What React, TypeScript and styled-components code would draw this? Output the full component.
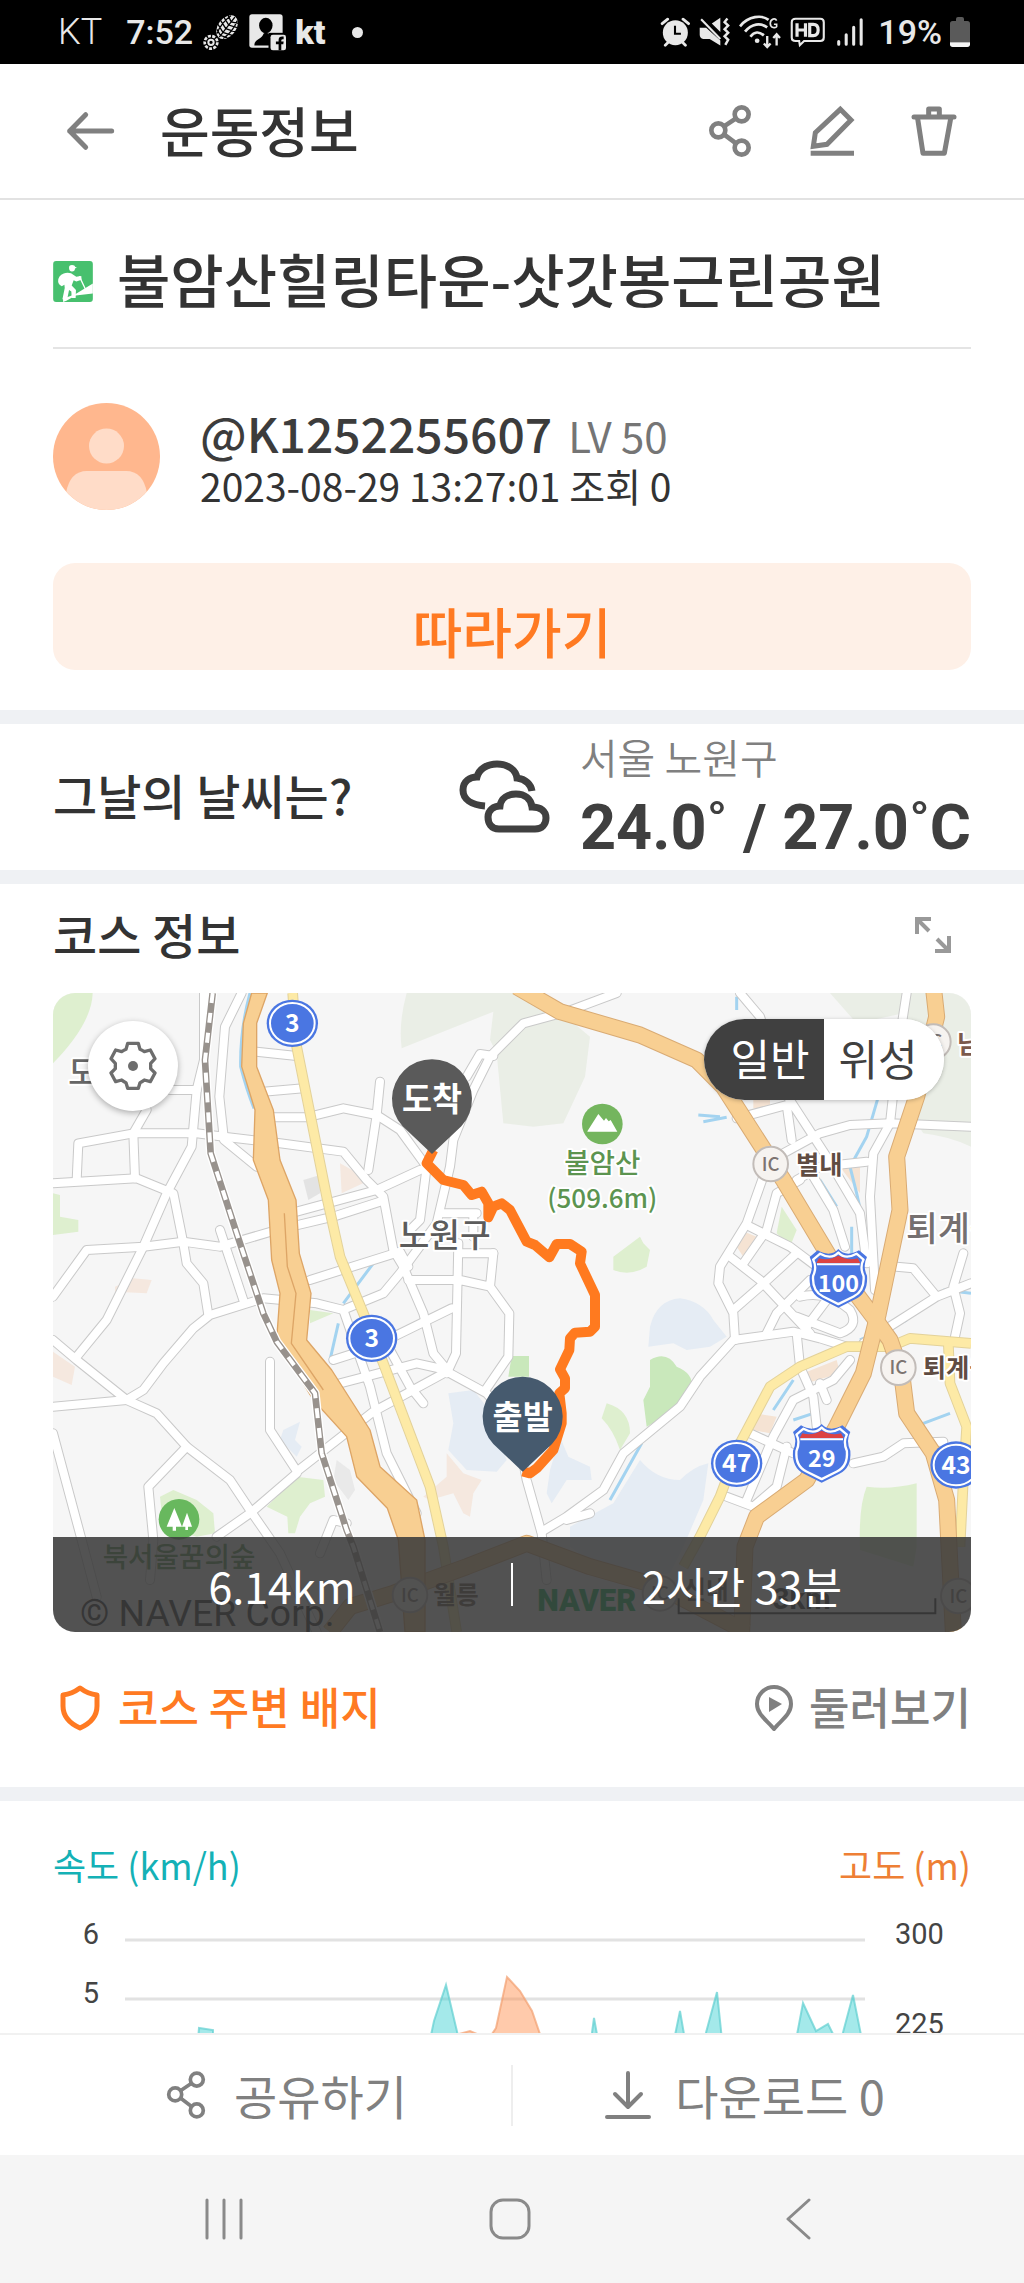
import React, { useState } from "react";
import styled, { createGlobalStyle, css } from "styled-components";

const KR = `"Noto Sans CJK KR", sans-serif`;
const ROBOTO = `Roboto, "Noto Sans CJK KR", sans-serif`;

const INK = "#333333";
const MUTED = "#808080";
const ORANGE = "#ff7a22";

const GlobalStyle = createGlobalStyle`
  *, *::before, *::after { box-sizing: border-box; }
  body { margin: 0; background: #ffffff; }
  button { border: 0; padding: 0; margin: 0; background: none; font: inherit; color: inherit; cursor: pointer; }
  a { color: inherit; text-decoration: none; }
  h1, h2, p { margin: 0; font-size: inherit; font-weight: inherit; }
  svg { display: block; flex: none; }
`;

const Screen = styled.div`
  display: flex;
  flex-direction: column;
  min-height: 100vh;
  background: #ffffff;
  color: ${INK};
  font-family: ${KR};
`;

/* ---------- status bar ---------- */

const StatusBar = styled.div`
  display: flex;
  justify-content: space-between;
  align-items: center;
  height: 64px;
  padding: 0 54px 0 58px;
  background: #000000;
  color: #e8e8e8;
  font-family: ${ROBOTO};
  font-size: 36px;
  line-height: 40px;
`;

const StatusGroup = styled.div<{ $gap: number }>`
  display: flex;
  align-items: center;
  gap: ${(p) => p.$gap}px;
`;

const Carrier = styled.span`
  margin-right: 15px;
  font-weight: 300;
`;

const StatusText = styled.span`
  font-weight: 500;
  font-size: 34px;
`;

const KtMark = styled.span`
  font-weight: 900;
  font-size: 34px;
`;

const Dot = styled.span`
  width: 11px;
  height: 11px;
  margin-left: 18px;
  border-radius: 50%;
  background: #e8e8e8;
`;

/* ---------- header ---------- */

const Header = styled.header`
  display: flex;
  align-items: center;
  padding: 40px 63px 40px 63px;
  border-bottom: 2px solid #e2e2e2;
  color: ${MUTED};
`;

const HeaderTitle = styled.h1`
  flex: 1;
  margin-left: 43px;
  padding-bottom: 2px;
  color: ${INK};
  font-size: 54px;
  font-weight: 500;
  line-height: 52px;
`;

const HeaderActions = styled.div`
  display: flex;
  gap: 48px;
`;

const IconButton = styled.button`
  display: flex;
  align-items: center;
  justify-content: center;
`;

/* ---------- sections ---------- */

const Section = styled.section`
  padding: 0 53px;
`;

const Divider = styled.div`
  height: 14px;
  background: #eff1f4;
`;

const CourseTitle = styled.div`
  display: flex;
  align-items: center;
  gap: 24px;
  padding: 49px 0 34px;
  border-bottom: 2px solid #e4e4e4;
  white-space: nowrap;

  h2 {
    padding-bottom: 6px;
    font-size: 58px;
    font-weight: 500;
    line-height: 58px;
  }
`;

const Profile = styled.div`
  display: flex;
  align-items: center;
  gap: 40px;
  padding: 54px 0 53px;
`;

const ProfileText = styled.div`
  white-space: nowrap;
`;

const NameLine = styled.p`
  display: flex;
  align-items: baseline;
  gap: 16px;
  line-height: 56px;
`;

const UserName = styled.strong`
  color: #3c3c3c;
  font-size: 48px;
  font-weight: 500;
`;

const Level = styled.span`
  color: #757575;
  font-size: 42px;
  line-height: 42px;
`;

const DateLine = styled.p`
  color: ${INK};
  font-size: 39px;
  line-height: 50px;
`;

const FollowButton = styled.button`
  display: block;
  width: 100%;
  margin-bottom: 40px;
  padding: 36px 0 7px;
  border-radius: 22px;
  background: #fef0e7;
  color: ${ORANGE};
  font-size: 54px;
  font-weight: 500;
  line-height: 64px;
`;

const Weather = styled(Section)`
  display: flex;
  align-items: center;
  padding-top: 2px;
  padding-bottom: 4px;
`;

const SectionTitle = styled.h2`
  flex: 1;
  padding-bottom: 4px;
  font-size: 48px;
  font-weight: 500;
  line-height: 56px;
`;

const WeatherInfo = styled.div`
  margin-left: 30px;
  padding-top: 6px;
  white-space: nowrap;
`;

const Region = styled.p`
  margin-bottom: 10px;
  color: ${MUTED};
  font-size: 41px;
  font-weight: 350;
  line-height: 48px;
`;

const Temperature = styled.p`
  color: #3f3f3f;
  font-family: ${ROBOTO};
  font-size: 63px;
  font-weight: 700;
  line-height: 76px;
`;

const CourseHeader = styled.div`
  display: flex;
  align-items: center;
  padding: 21px 20px 28px 0;
  color: #999999;

  h2 {
    color: ${INK};
  }
`;

/* ---------- map ---------- */

const MapCard = styled.div`
  position: relative;
  overflow: hidden;
  border-radius: 22px;
  background: #f6f6f6;
`;

const MapSvg = styled.svg`
  width: 100%;
  height: auto;
`;

const GearButton = styled.button`
  position: absolute;
  top: 28px;
  left: 35px;
  display: flex;
  align-items: center;
  justify-content: center;
  width: 90px;
  height: 90px;
  border-radius: 50%;
  background: #ffffff;
  box-shadow: 0 2px 6px rgba(0, 0, 0, 0.3);
  color: #6d6d6d;
`;

const LayerToggle = styled.div`
  position: absolute;
  top: 26px;
  right: 27px;
  display: flex;
  overflow: hidden;
  border-radius: 41px;
  background: #ffffff;
  box-shadow: 0 1px 4px rgba(0, 0, 0, 0.25);
`;

const LayerButton = styled.button<{ $active: boolean; $side: "left" | "right" }>`
  width: 120px;
  padding: ${(p) => (p.$side === "left" ? "0 0 4px 12px" : "0 12px 4px 0")};
  font-size: 43px;
  line-height: 77px;
  ${(p) =>
    p.$active
      ? css`
          background: #404040;
          color: #ffffff;
        `
      : css`
          background: #ffffff;
          color: #404040;
        `}
`;

const MapSummary = styled.div`
  position: absolute;
  right: 0;
  bottom: 0;
  left: 0;
  display: flex;
  align-items: center;
  height: 95px;
  background: rgba(58, 58, 58, 0.87);
  color: #ffffff;
  font-size: 43px;
`;

const SummaryItem = styled.span`
  flex: 1;
  text-align: center;
`;

const SummaryRule = styled.span`
  width: 2px;
  height: 43px;
  background: #ffffff;
`;

const LinkRow = styled(Section)`
  display: flex;
  justify-content: space-between;
  align-items: center;
  padding-top: 46px;
  padding-bottom: 49px;
`;

const RowLink = styled.a<{ $color: string; $weight: number }>`
  display: flex;
  align-items: center;
  gap: 15px;
  color: ${(p) => p.$color};
  font-size: 44px;
  font-weight: ${(p) => p.$weight};
  line-height: 56px;

  span {
    padding-bottom: 4px;
  }
`;

/* ---------- chart ---------- */

const ChartSection = styled(Section)`
  padding-top: 39px;
`;

const Legend = styled.div`
  display: flex;
  justify-content: space-between;
  margin-bottom: 27px;
  font-size: 36px;
  line-height: 48px;
`;

const LegendItem = styled.span<{ $color: string }>`
  color: ${(p) => p.$color};
`;

const ChartRow = styled.div`
  display: flex;
  height: 118px;
  overflow: hidden;
`;

const Axis = styled.div<{ $step: number; $align: "left" | "right" }>`
  flex: none;
  width: ${(p) => (p.$align === "right" ? 46 : 76)}px;
  color: #444444;
  font-family: ${ROBOTO};
  font-size: 29px;
  line-height: 38px;
  text-align: ${(p) => p.$align};

  span {
    display: block;
    height: ${(p) => p.$step}px;
  }
`;

const Plot = styled.svg`
  flex: 1;
  min-width: 0;
  height: 118px;
  margin: 0 30px 0 26px;
`;

/* ---------- bottom bars ---------- */

const ActionBar = styled.div`
  display: grid;
  grid-template-columns: 1fr 2px 1fr;
  align-items: center;
  border-top: 2px solid #f1f1f1;
  background: #ffffff;
  color: ${MUTED};
`;

const ActionButton = styled.button<{ $padding: string }>`
  display: flex;
  align-items: center;
  justify-content: center;
  gap: 23px;
  padding: ${(p) => p.$padding};
  font-size: 47px;
  line-height: 60px;
`;

const ActionRule = styled.span`
  height: 61px;
  background: #eeeeee;
`;

const NavBar = styled.nav`
  display: flex;
  justify-content: space-between;
  align-items: center;
  height: 128px;
  padding: 0 200px;
  background: #f5f5f5;
  color: #8a8a8a;
`;

/* ---------- icons ---------- */

const BackIcon = () => (
  <svg width="54" height="54" viewBox="0 0 162 162" fill="none" stroke="currentColor" strokeWidth="15" strokeLinecap="round" strokeLinejoin="round">
    <path d="M146 81H20M68 32L20 81L68 130" />
  </svg>
);

const ShareIcon = ({ size = 54, stroke = 14 }: { size?: number; stroke?: number }) => (
  <svg width={size} height={size} viewBox="0 0 162 162" fill="none" stroke="currentColor" strokeWidth={stroke}>
    <circle cx="116" cy="31" r="21" />
    <circle cx="46" cy="79" r="21" />
    <circle cx="116" cy="131" r="21" />
    <path d="M63 67L99 43M63 91L99 118" />
  </svg>
);

const EditIcon = () => (
  <svg width="54" height="54" viewBox="0 0 162 162" fill="none" stroke="currentColor" strokeWidth="15">
    <path d="M106 16L138 48L66 121L25 127L31 86Z" />
    <path d="M17 148H147" />
  </svg>
);

const TrashIcon = () => (
  <svg width="54" height="54" viewBox="0 0 162 162" fill="none" stroke="currentColor" strokeWidth="15" strokeLinejoin="round">
    <path d="M21 39H141" strokeLinecap="round" />
    <path d="M65 36V15H97V36" />
    <path d="M32 44L48 148H112L131 44" />
  </svg>
);

const BootIcon = () => (
  <svg width="38" height="38" viewBox="0 0 114 114" fill="none" stroke="#e8e8e8">
    <g transform="rotate(38 74 44)">
      <ellipse cx="74" cy="42" rx="27" ry="40" fill="#e8e8e8" stroke="none" />
      <path d="M74 4V80M62 8C56 28 56 56 62 76M86 8C92 28 92 56 86 76M47 24L74 34L101 24M46 38L74 48L102 38M47 52L74 62L101 52M54 12L74 22L94 12M54 66L74 74L94 66" stroke="#000000" strokeWidth="4" />
    </g>
    <circle cx="27" cy="88" r="19" strokeWidth="8" strokeDasharray="9 4" />
    <circle cx="27" cy="88" r="8" strokeWidth="6" />
  </svg>
);

const ContactIcon = () => (
  <svg width="37" height="37" viewBox="0 0 110 110">
    <rect x="1" y="1" width="99" height="99" rx="8" fill="#e8e8e8" />
    <ellipse cx="50" cy="34" rx="20" ry="23" fill="#000000" />
    <path d="M16 94C16 74 36 76 42 62C42 54 58 54 60 62V94Z" fill="#000000" />
    <rect x="58" y="56" width="52" height="54" fill="#000000" />
    <rect x="64" y="62" width="46" height="46" rx="7" fill="#e8e8e8" />
    <path d="M88 108V90H80V82H88V77Q88 65 103 67V75Q96 74 96 79V82H103L102 90H96V108Z" fill="#000000" />
  </svg>
);

const AlarmIcon = () => (
  <svg width="32" height="30" viewBox="-6 0 92 84">
    <circle cx="41" cy="44" r="36" fill="#e8e8e8" />
    <path d="M3 18L19 5M79 18L63 5M12 80L22 70M70 80L60 70" stroke="#e8e8e8" strokeWidth="8" strokeLinecap="round" />
    <path d="M40 24V47H57" fill="none" stroke="#000000" strokeWidth="6" />
  </svg>
);

const MuteIcon = () => (
  <svg width="32" height="30" viewBox="0 0 90 84" fill="#e8e8e8">
    <path d="M2 30H20L60 66V80L30 62H12Q2 60 2 50ZM36 18L60 2V42Z" />
    <path d="M6 6L60 62" stroke="#e8e8e8" strokeWidth="6" />
    <path d="M80 4L72 14L82 24L72 34L82 44L72 54L82 64L74 78" fill="none" stroke="#e8e8e8" strokeWidth="7" />
  </svg>
);

const WifiIcon = () => (
  <svg width="43" height="34" viewBox="0 0 128 100" fill="none" stroke="#e8e8e8" strokeWidth="8">
    <path d="M3 33C28 2 68 -2 88 14M18 49C38 24 64 22 84 36M34 64C46 48 60 48 74 60" />
    <circle cx="54" cy="76" r="7" fill="#e8e8e8" stroke="none" />
    <path d="M112 16C108 8 94 10 93 24C93 40 110 38 112 34V27H104" strokeWidth="5" />
    <path d="M84 62V94M74 84L84 95L94 84M112 90V58M102 68L112 57L122 68" strokeWidth="7" />
  </svg>
);

const HdIcon = () => (
  <svg width="38" height="31" viewBox="0 0 108 88" fill="none" stroke="#e8e8e8" strokeWidth="6">
    <path d="M16 5H86Q96 5 96 15V58Q96 68 86 68H40L28 80L26 68H16Q5 68 5 58V15Q5 5 16 5Z" />
    <path d="M20 18V56M44 18V56M20 37H44M56 21V53H66Q80 53 80 37Q80 21 66 21Z" strokeWidth="9" />
  </svg>
);

const SignalIcon = () => (
  <svg width="34" height="30" viewBox="0 0 100 84" stroke="#e8e8e8" strokeWidth="9" strokeLinecap="round">
    <path d="M8 70V78M30 50V78M52 28V78M74 6V78" />
  </svg>
);

const BatteryIcon = () => (
  <svg width="20" height="30" viewBox="0 0 60 90">
    <path d="M18 6Q18 0 24 0H36Q42 0 42 6V12H52Q60 12 60 20V76H0V20Q0 12 8 12H18Z" fill="#5a5a5a" />
    <path d="M0 76H60V82Q60 90 52 90H8Q0 90 0 82Z" fill="#f4f4f4" />
  </svg>
);

const HikerIcon = () => (
  <svg width="40" height="41" viewBox="0 0 120 124">
    <rect width="120" height="124" rx="9" fill="#47c06e" />
    <g fill="#ffffff">
      <path d="M48 22Q47 12 57 12Q66 12 67 18L72 20L66 23Q66 32 57 32Q49 32 48 22Z" />
      <path d="M32 38Q15 44 15 62Q16 72 26 76L34 72L35 82L28 116L42 118L48 88L55 92L56 112H68L69 88L56 74L62 58L70 62L86 57L85 45L70 48L54 37Q42 33 32 38Z" />
      <path d="M120 68V98L68 104L40 120L30 124L30 114L68 100Z" />
    </g>
    <path d="M79 46L98 86" stroke="#ffffff" strokeWidth="4" />
  </svg>
);

const Avatar = () => (
  <svg width="107" height="107" viewBox="0 0 107 107" role="img" aria-label="프로필">
    <defs>
      <clipPath id="avatar-clip">
        <circle cx="53.5" cy="53.5" r="53.5" />
      </clipPath>
    </defs>
    <g clipPath="url(#avatar-clip)">
      <rect width="107" height="107" fill="#ffb78e" />
      <circle cx="53.5" cy="43" r="17.5" fill="#ffdcc8" />
      <path d="M13 90Q17 68 34 68H73Q90 68 94 90L94 107H13Z" fill="#ffdcc8" />
    </g>
  </svg>
);

const CloudIcon = () => (
  <svg width="91" height="73" viewBox="0 0 91 73" fill="none" stroke="#404040" strokeWidth="7">
    <path d="M26 46C12 45 4 39 4 30C4 21 11 17 18 17C20 9 28 4 38 4C49 4 57 10 58 18C67 19 72 25 73 31" />
    <path d="M40 69C32 69 29 63 29 57C29 50 35 46 41 46C42 38 49 34 57 34C66 34 72 39 73 47C82 47 87 51 87 58C87 64 83 69 76 69Z" />
  </svg>
);

const ExpandIcon = () => (
  <svg width="36" height="36" viewBox="0 0 36 36" fill="none" stroke="currentColor" strokeWidth="4">
    <path d="M2 17V2H16M3 3L14 14M34 19V34H20M33 33L22 22" />
  </svg>
);

const GearIcon = () => (
  <svg width="48" height="50" viewBox="0 0 144 150" fill="none" stroke="currentColor" strokeWidth="10" strokeLinejoin="round">
    <path d="M56 7H88L93 25Q100 28 106 32L124 27L138 53L125 67V83L138 96L124 122L106 117Q100 122 93 125L88 142H56L51 125Q44 122 38 117L20 122L6 96L19 83V67L6 53L20 27L38 32Q44 28 51 25Z" />
    <circle cx="72" cy="75" r="15" fill="currentColor" stroke="none" />
  </svg>
);

const BadgeIcon = () => (
  <svg width="50" height="48" viewBox="0 0 50 48" fill="none" stroke="currentColor" strokeWidth="5" strokeLinejoin="round">
    <path d="M27 4Q35 10 44 11V22C44 33 36 40 27 44C18 40 10 33 10 22V11Q19 10 27 4Z" />
  </svg>
);

const PlayPinIcon = () => (
  <svg width="40" height="48" viewBox="0 0 40 48" fill="none" stroke="currentColor" strokeWidth="4">
    <path d="M20 45C14 37 3 31 3 20A17 17 0 0 1 37 20C37 31 26 37 20 45Z" strokeLinejoin="round" />
    <path d="M15 13V28L28 20Z" fill="currentColor" stroke="none" />
  </svg>
);

const DownloadIcon = () => (
  <svg width="48" height="50" viewBox="0 0 48 50" fill="none" stroke="currentColor" strokeWidth="4" strokeLinecap="round" strokeLinejoin="round">
    <path d="M24 3V36M11 24L24 37L37 24M3 47H45" />
  </svg>
);

const RecentsIcon = () => (
  <svg width="46" height="42" viewBox="0 0 46 42" stroke="currentColor" strokeWidth="3" strokeLinecap="round">
    <path d="M7 2V40M24 2V40M41 2V40" />
  </svg>
);

const HomeIcon = () => (
  <svg width="42" height="42" viewBox="0 0 42 42" fill="none" stroke="currentColor" strokeWidth="3">
    <rect x="2" y="2" width="38" height="38" rx="12" />
  </svg>
);

const NavBackIcon = () => (
  <svg width="50" height="42" viewBox="0 0 50 42" fill="none" stroke="currentColor" strokeWidth="3" strokeLinecap="round" strokeLinejoin="round">
    <path d="M35 2L14 21L35 40" />
  </svg>
);

/* ---------- map drawing ---------- */

const areas: { fill: string; d: string }[] = [
  { fill: "#deefcf", d: "M9 39H128Q126 130 9 250Z" },
  { fill: "#eaeee6", d: "M1070 39H1430L1530 95L1620 170L1605 290L1540 430L1450 440L1360 430L1340 220L1320 180L1330 95L1055 205Q1045 130 1070 39Z" },
  { fill: "#eaeee6", d: "M2340 39H2763V500Q2700 470 2620 460L2600 430L2640 200L2560 100L2420 130Z" },
  { fill: "#c9e8bb", d: "M1800 1140Q1850 1110 1880 1160Q1930 1180 1925 1220L1860 1300L1790 1340L1780 1260L1800 1220Z" },
  { fill: "#deefcf", d: "M1670 1270Q1740 1290 1740 1360L1710 1410Q1690 1350 1655 1315Z" },
  { fill: "#deefcf", d: "M1690 830L1770 770L1780 790L1800 810L1790 860Q1740 890 1690 870Z" },
  { fill: "#deefcf", d: "M2195 680L2240 750L2220 800L2180 760Z" },
  { fill: "#deefcf", d: "M2450 1520Q2520 1530 2600 1510L2600 1700L2590 1760L2430 1710Q2425 1580 2450 1520Z" },
  { fill: "#deefcf", d: "M9 640L30 645V710L85 720V755L9 765Z" },
  { fill: "#c9e8bb", d: "M1385 1128H1437V1190H1375Z" },
  { fill: "#deefcf", d: "M780 990L850 1000L780 1030Z" },
  { fill: "#deefcf", d: "M740 1490L820 1500L825 1550L780 1570L750 1610L735 1660H715L712 1610L650 1580L700 1530Z" },
  { fill: "#deefcf", d: "M330 1550L370 1530L440 1560L490 1600L495 1660L440 1670L340 1640Z" },
  { fill: "#e5ecf4", d: "M1800 1040Q1820 960 1890 955Q1960 965 1990 1020L2030 1070L1980 1100L1910 1110L1870 1090L1795 1100Z" },
  { fill: "#e5ecf4", d: "M1770 1440Q1820 1500 1890 1500Q1930 1460 1975 1450L1960 1560L1900 1700L1860 1780L1700 1800L1560 1700L1560 1640L1690 1570Z" },
  { fill: "#e5ecf4", d: "M1530 1370L1555 1430L1620 1460L1625 1500L1550 1500L1505 1570L1490 1540L1500 1470Z" },
  { fill: "#e5ecf4", d: "M1195 1240L1270 1230L1310 1280L1370 1440L1340 1475L1250 1470L1195 1410L1210 1330Z" },
  { fill: "#e5ecf4", d: "M700 1350L750 1325L735 1380L755 1400L740 1430L690 1380Z" },
  { fill: "#f5e8df", d: "M1190 1420L1240 1480L1295 1500L1270 1540L1260 1610L1240 1600L1210 1540L1140 1560L1120 1550L1190 1490Z" },
  { fill: "#f5e8df", d: "M870 550L960 600L875 640Z" },
  { fill: "#f5e8df", d: "M195 920L250 895L305 900L290 940L195 935Z" },
  { fill: "#f5e8df", d: "M9 1115L75 1160L65 1215L9 1190Z" },
  { fill: "#f5e3d3", d: "M2070 750L2120 770L2080 830L2060 800ZM2260 1180L2360 1140L2370 1180L2270 1210ZM2110 1300L2180 1310L2160 1360L2110 1350ZM2370 560L2430 560L2430 640ZM2110 360L2160 345V390L2110 385Z" },
  { fill: "#e3e3e3", d: "M760 600L810 585V640L775 660Z" },
  { fill: "#e9e9e9", d: "M860 1440L900 1470L915 1530L895 1560L850 1500Z" },
];

const streams = [
  "M600 39Q570 150 572 260Q590 330 612 385",
  "M2060 50V90M1945 405L2010 410M2030 412L1960 425",
  "M2485 350L2450 470L2400 560L2420 640L2440 730M2310 600L2360 680M2405 740V820M2215 375L2210 430",
  "M1775 1390L1680 1560M2205 1420L2180 1500M2170 1290L2230 1200M2230 1320L2290 1300",
  "M2680 930L2763 940M2430 1080L2570 1020M2620 1330L2700 1300",
  "M880 970L970 850M865 1030L840 1140",
];

const roads = [
  "M462 39V240L440 330L425 500L350 640L280 800L200 960L170 1020L80 1130",
  "M575 39L525 140L508 350L522 480L620 560",
  "M522 470L690 490L880 515L950 600L1000 650L1030 810L1060 860L1120 1000L1150 1120L1200 1180L1310 1240L1400 1340L1430 1500L1475 1660L1490 1800",
  "M80 600L85 490L250 460L440 460L522 470",
  "M9 610L260 595L370 640L400 790L410 850L460 910L475 1005",
  "M290 390L250 460L255 595M360 330H440",
  "M9 950L110 810L280 800L400 785L510 800L680 750L850 710L990 665",
  "M510 750L580 960",
  "M9 1280L230 1260L280 1230L340 1150L430 1045L480 1005L640 955L800 970L880 990",
  "M620 215L740 228M640 335L760 325M670 412H770L880 385L980 405L1050 450L1130 560L1110 720L1080 750",
  "M990 305L980 405L955 570",
  "M740 695L980 630L1110 570",
  "M780 900L1050 815L1075 860",
  "M1700 39L1550 95L1420 130L1320 230L1270 330L1210 480L1200 560L1160 730L1050 880L1000 940L890 985",
  "M1250 290L1290 222L1330 228M1180 700H1280M1230 820H1330M1270 700V770",
  "M1075 900H1230L1320 920M1225 790L1218 1120L1190 1180M1330 820L1320 920L1378 1000L1375 1130L1310 1225",
  "M850 1140L960 1105L1205 985M870 1210L1100 1150L1190 1170M740 1475L970 1295L1190 1175M880 990L960 1220L1010 1420L1100 1600M1020 1110L1080 1220L1120 1270",
  "M9 1080L80 1140L230 1260L320 1300L410 1400L540 1500L600 1590L690 1720L800 1956",
  "M410 1400L295 1520L310 1680L300 1800M9 1360L95 1680L140 1850M660 1145V1350L735 1465M500 1670L600 1600L740 1480M810 1720L850 1620L890 1630",
  "M1475 1655L1550 1610L1660 1530L1720 1420L1890 1280L1950 1190L2050 1080L2230 1055L2310 1075L2390 1100M1550 1620L1620 1600",
  "M2070 39L2130 110L2200 330L2330 530L2430 700L2450 850M2060 415L2210 375L2225 480",
  "M2200 520L2310 460L2400 435L2520 430L2763 440",
  "M2570 39L2545 200L2520 430L2470 520L2460 650L2475 930",
  "M2240 600L2310 560L2450 545M2140 590L2090 730L2010 860L2005 910L2050 1000L2055 1080",
  "M2250 600L2180 640L2150 750L2080 850M2290 590L2350 690L2385 800",
  "M2090 735L2220 800L2300 860M2040 830L2130 900L2280 1060M2240 820L2130 920L2050 990M2280 900L2180 1000L2150 1060",
  "M2250 950Q2330 930 2400 990Q2430 1040 2370 1060L2240 1010M2330 960L2270 1040",
  "M2540 860L2590 865L2660 950L2550 1020L2440 1090M2660 950L2763 910M2740 820L2710 920L2730 1000L2715 1070",
  "M2240 1060L2250 1160L2290 1250L2300 1340M2400 1140L2350 1200L2230 1260L2170 1370L2090 1560M2310 1210L2330 1260M2100 1360L2230 1420",
  "M2030 1550L2110 1580L2180 1520L2210 1400M2410 1450L2500 1430L2560 1390L2680 1385",
];

const yellowRoads = [
  "M728 39L740 200L800 500L830 650L870 830L940 1000L1000 1150L1140 1520L1180 1700L1220 1956",
  "M1900 1760L1950 1670L2010 1550L2070 1390L2160 1220L2250 1160L2390 1100H2520L2580 1075L2763 1090",
  "M2695 1090L2700 1210L2750 1340L2740 1500L2730 1700",
];

const highways = [
  "M1400 20L1530 95L1770 165L1940 240L2020 320L2200 600L2350 850L2470 1010L2520 1080L2555 1180L2570 1300L2650 1420L2690 1560L2710 1956",
  "M2650 20L2660 110L2600 350L2540 530L2550 690L2510 880L2485 1000L2440 1180L2360 1340L2270 1500L2120 1610L2085 1700L2075 1956",
  "M840 1956L900 1880L1030 1840L1250 1760L1430 1690L1620 1760L1830 1820L2090 1956",
];

const expressway =
  "M652 39L620 130V260L670 390L690 540L738 660L748 820L783 940L770 1080L845 1170L960 1350L990 1460L1100 1560L1125 1680V1956H1065L1045 1680L1012 1585L920 1490L890 1370L790 1260L680 1080L690 940L665 840L655 660L610 540L615 390L575 260L580 130L605 39Z";

const railway = "M488 39L465 240L482 520L560 760L640 1000L680 1085L795 1240L815 1420L890 1650L910 1700L990 1956";

const trail =
  "M1150 510L1130 550L1180 600L1240 615L1265 645L1295 635L1315 670V712L1330 680L1355 670L1380 690L1430 785L1455 795L1498 832L1520 792H1560L1595 815L1590 850L1635 945V1040L1620 1055L1575 1058L1560 1075L1558 1110L1530 1168L1545 1195V1225L1528 1240L1535 1300V1330L1510 1410L1460 1465L1440 1480L1418 1474";

const RouteCircle = ({ x, y, label }: { x: number; y: number; label: string }) => (
  <g>
    <ellipse cx={x} cy={y} rx="77" ry="71" fill="#4a76e2" />
    <ellipse cx={x} cy={y} rx="67" ry="61" fill="none" stroke="#ffffff" strokeWidth="6" />
    <MapText x={x} y={y + 27} $size={74} $color="#ffffff" $weight={700} $anchor="middle">
      {label}
    </MapText>
  </g>
);

const shieldPath = "M0 -88Q-12 -74 -30 -74Q-44 -74 -62 -84L-86 -64Q-72 -38 -86 -8Q-90 44 -52 62L0 88L52 62Q90 44 86 -8Q72 -38 86 -64L62 -84Q44 -74 30 -74Q12 -74 0 -88Z";

const Shield = ({ x, y, label }: { x: number; y: number; label: string }) => (
  <g transform={`translate(${x} ${y})`}>
    <path d={shieldPath} fill="#4a76e2" strokeLinejoin="round" />
    <path d={shieldPath} fill="none" stroke="#ffffff" strokeWidth="8" strokeLinejoin="round" transform="scale(.88)" />
    <path d="M-66 -46L-58 -60Q-40 -54 -18 -60L0 -68L18 -60Q40 -54 58 -60L66 -46Z" fill="#dc4343" />
    <path d="M-64 -42H64" stroke="#ffffff" strokeWidth="6" />
    <MapText x={0} y={40} $size={70} $color="#ffffff" $weight={700} $anchor="middle">
      {label}
    </MapText>
  </g>
);

const Interchange = ({ x, y }: { x: number; y: number }) => (
  <g>
    <circle cx={x} cy={y} r="52" fill="#f6f3f0" stroke="#c2bcb8" strokeWidth="6" />
    <MapText x={x} y={y + 20} $size={56} $color="#7d7470" $weight={500} $anchor="middle">
      IC
    </MapText>
  </g>
);

const Marker = ({ x, y, color, label }: { x: number; y: number; color: string; label: string }) => (
  <g transform={`translate(${x} ${y})`}>
    <path d="M0 165L-88 82A120 120 0 1 1 88 82Z" fill={color} />
    <MapText x={0} y={36} $size={98} $color="#ffffff" $weight={700} $anchor="middle">
      {label}
    </MapText>
  </g>
);

const MapText = styled.text<{ $size: number; $color: string; $weight?: number; $anchor?: string; $halo?: boolean; $latin?: boolean }>`
  font-family: ${(p) => (p.$latin ? ROBOTO : KR)};
  font-size: ${(p) => p.$size}px;
  font-weight: ${(p) => p.$weight ?? 400};
  fill: ${(p) => p.$color};
  text-anchor: ${(p) => p.$anchor ?? "start"};
  ${(p) =>
    p.$halo &&
    css`
      paint-order: stroke;
      stroke: #ffffff;
      stroke-width: 12px;
      stroke-linejoin: round;
    `}
`;

const CourseMap = () => (
  <MapSvg viewBox="9 39 2754 1917" role="img" aria-label="코스 지도">
    <rect x="9" y="39" width="2754" height="1917" fill="#f6f6f6" />
    {areas.map((a) => (
      <path key={a.d} d={a.d} fill={a.fill} />
    ))}
    <g fill="none" stroke="#a3d3f0" strokeWidth="9">
      {streams.map((d) => (
        <path key={d} d={d} />
      ))}
    </g>
    <g fill="none" stroke="#c9c9c9" strokeWidth="30" strokeLinejoin="round" strokeLinecap="round">
      {roads.map((d) => (
        <path key={d} d={d} />
      ))}
    </g>
    <g fill="none" stroke="#ffffff" strokeWidth="24" strokeLinejoin="round" strokeLinecap="round">
      {roads.map((d) => (
        <path key={d} d={d} />
      ))}
    </g>
    <g fill="none" strokeLinejoin="round">
      {yellowRoads.map((d) => (
        <path key={d} d={d} stroke="#e3d29a" strokeWidth="32" />
      ))}
      {yellowRoads.map((d) => (
        <path key={d} d={d} stroke="#fdeaa6" strokeWidth="26" />
      ))}
      {highways.map((d) => (
        <path key={d} d={d} stroke="#d9ab74" strokeWidth="51" />
      ))}
      {highways.map((d) => (
        <path key={d} d={d} stroke="#f8cf92" strokeWidth="45" />
      ))}
      <path d={expressway} fill="#f8cf92" stroke="#dda566" strokeWidth="4" />
      <path d="M703 700L712 860L738 940L724 1090L820 1230" stroke="#dda566" strokeWidth="4" />
      <path d={railway} stroke="#ffffff" strokeWidth="28" />
      <path d={railway} stroke="#98928d" strokeWidth="20" />
      <path d={railway} stroke="#ffffff" strokeWidth="12" strokeDasharray="30 30" />
    </g>

    <MapText x={55} y={312} $size={94} $color="#666666" $weight={500} $halo>도봉구</MapText>
    <MapText x={1046} y={802} $size={100} $color="#5c5c5c" $weight={500} $halo>노원구</MapText>
    <MapText x={2568} y={784} $size={104} $color="#757070" $weight={500} $halo>퇴계원</MapText>
    <MapText x={2238} y={582} $size={76} $color="#5f4c42" $weight={700} $halo>별내</MapText>
    <MapText x={2618} y={1192} $size={76} $color="#5f4c42" $weight={700} $halo>퇴계원</MapText>
    <MapText x={2722} y={218} $size={76} $color="#7b5a4c" $weight={700} $halo>남양주</MapText>
    <Interchange x={2650} y={185} />
    <Interchange x={2162} y={552} />
    <Interchange x={2545} y={1163} />
    <Interchange x={1080} y={1845} />
    <Interchange x={1830} y={1840} />
    <Interchange x={2725} y={1848} />
    <MapText x={1150} y={1872} $size={74} $color="#5f4c42" $weight={700}>월릉</MapText>
    <MapText x={1900} y={1856} $size={74} $color="#5f4c42" $weight={700}>신내</MapText>

    <circle cx="1657" cy="432" r="61" fill="#74b55e" />
    <path d="M1613 452L1645 402L1662 422L1668 414L1676 424L1682 420L1702 455H1612Z" fill="#ffffff" />
    <MapText x={1657} y={580} $size={83} $color="#5c9450" $weight={500} $anchor="middle" $halo>불암산</MapText>
    <MapText x={1657} y={684} $size={78} $color="#5c9450" $weight={500} $anchor="middle" $halo>(509.6m)</MapText>

    <circle cx="387" cy="1618" r="61" fill="#68b85e" />
    <path d="M373 1584L396 1640H378V1652H368V1640H350ZM411 1598L426 1640H414V1650H406V1640H396Z" fill="#ffffff" />
    <MapText x={387} y={1762} $size={83} $color="#4c8a45" $weight={500} $anchor="middle">북서울꿈의숲</MapText>
    <MapText x={90} y={1938} $size={112} $color="#222222" $latin>© NAVER Corp.</MapText>
    <MapText x={1462} y={1892} $size={92} $color="#03b050" $weight={900} $latin>NAVER</MapText>
    <MapText x={2168} y={1888} $size={88} $color="#222222" $weight={700} $latin>3km</MapText>
    <path d="M1886 1855V1900H2656V1855" fill="none" stroke="#222222" strokeWidth="6" />

    <RouteCircle x={727} y={130} label="3" />
    <RouteCircle x={965} y={1075} label="3" />
    <RouteCircle x={2060} y={1450} label="47" />
    <RouteCircle x={2718} y={1455} label="43" />
    <Shield x={2365} y={895} label="100" />
    <Shield x={2315} y={1420} label="29" />

    <path d={trail} fill="none" stroke="#ff7a1f" strokeWidth="30" strokeLinejoin="round" />
    <Marker x={1146} y={357} color="#5a5a5a" label="도착" />
    <Marker x={1418} y={1310} color="#465a6e" label="출발" />
  </MapSvg>
);

/* ---------- chart drawing ---------- */

const SpeedChart = () => (
  <Plot viewBox="0 0 740 118" preserveAspectRatio="none" role="img" aria-label="속도와 고도 그래프">
    <path d="M0 25H740M0 84H740" stroke="#e2e2e2" strokeWidth="3" />
    <g fill="#36cfd0" fillOpacity="0.45" stroke="#5fcfd0" strokeOpacity="0.7" strokeWidth="2">
      <path d="M73 125L74 113L88 115V125Z" />
      <path d="M305 125L309 106L321 70L334 125Z" />
      <path d="M466 125L469 103L473 125Z" />
      <path d="M549 125L555 96L560 125Z" />
      <path d="M579 125L592 77L597 125Z" />
      <path d="M671 125L678 88L691 116L703 109L711 125Z" />
      <path d="M716 125L728 80L737 125Z" />
    </g>
    <g fill="#ff8a45" fillOpacity="0.45" stroke="#f2a070" strokeOpacity="0.7" strokeWidth="2">
      <path d="M334 119L345 116L352 119Z" />
      <path d="M363 125L371 113L382 62L395 76L407 96L417 125Z" />
    </g>
  </Plot>
);

export default function App() {
  const [layer, setLayer] = useState<"normal" | "satellite">("normal");

  return (
    <Screen>
      <GlobalStyle />
      <StatusBar>
        <StatusGroup $gap={9}>
          <Carrier>KT</Carrier>
          <StatusText>7:52</StatusText>
          <BootIcon />
          <ContactIcon />
          <KtMark>kt</KtMark>
          <Dot />
        </StatusGroup>
        <StatusGroup $gap={8}>
          <AlarmIcon />
          <MuteIcon />
          <WifiIcon />
          <HdIcon />
          <SignalIcon />
          <StatusText>19%</StatusText>
          <BatteryIcon />
        </StatusGroup>
      </StatusBar>

      <Header>
        <IconButton aria-label="뒤로"><BackIcon /></IconButton>
        <HeaderTitle>운동정보</HeaderTitle>
        <HeaderActions>
          <IconButton aria-label="공유"><ShareIcon /></IconButton>
          <IconButton aria-label="수정"><EditIcon /></IconButton>
          <IconButton aria-label="삭제"><TrashIcon /></IconButton>
        </HeaderActions>
      </Header>

      <Section>
        <CourseTitle>
          <HikerIcon />
          <h2>불암산힐링타운-삿갓봉근린공원</h2>
        </CourseTitle>
        <Profile>
          <Avatar />
          <ProfileText>
            <NameLine>
              <UserName>@K1252255607</UserName>
              <Level>LV 50</Level>
            </NameLine>
            <DateLine>2023-08-29 13:27:01 조회 0</DateLine>
          </ProfileText>
        </Profile>
        <FollowButton>따라가기</FollowButton>
      </Section>

      <Divider />

      <Weather>
        <SectionTitle>그날의 날씨는?</SectionTitle>
        <CloudIcon />
        <WeatherInfo>
          <Region>서울 노원구</Region>
          <Temperature>24.0˚ / 27.0˚C</Temperature>
        </WeatherInfo>
      </Weather>

      <Divider />

      <Section>
        <CourseHeader>
          <SectionTitle>코스 정보</SectionTitle>
          <IconButton aria-label="지도 확대"><ExpandIcon /></IconButton>
        </CourseHeader>
        <MapCard>
          <CourseMap />
          <GearButton aria-label="지도 설정"><GearIcon /></GearButton>
          <LayerToggle>
            <LayerButton $side="left" $active={layer === "normal"} aria-pressed={layer === "normal"} onClick={() => setLayer("normal")}>
              일반
            </LayerButton>
            <LayerButton $side="right" $active={layer === "satellite"} aria-pressed={layer === "satellite"} onClick={() => setLayer("satellite")}>
              위성
            </LayerButton>
          </LayerToggle>
          <MapSummary>
            <SummaryItem>6.14km</SummaryItem>
            <SummaryRule />
            <SummaryItem>2시간 33분</SummaryItem>
          </MapSummary>
        </MapCard>
      </Section>

      <LinkRow>
        <RowLink href="#badges" $color={ORANGE} $weight={500}>
          <BadgeIcon />
          <span>코스 주변 배지</span>
        </RowLink>
        <RowLink href="#around" $color={MUTED} $weight={500}>
          <PlayPinIcon />
          <span>둘러보기</span>
        </RowLink>
      </LinkRow>

      <Divider />

      <ChartSection>
        <Legend>
          <LegendItem $color="#14b1b6">속도 (km/h)</LegendItem>
          <LegendItem $color="#ee7f35">고도 (m)</LegendItem>
        </Legend>
        <ChartRow>
          <Axis $step={59} $align="right">
            <span>6</span>
            <span>5</span>
          </Axis>
          <SpeedChart />
          <Axis $step={90} $align="left">
            <span>300</span>
            <span>225</span>
          </Axis>
        </ChartRow>
      </ChartSection>

      <ActionBar>
        <ActionButton $padding="30px 0 30px 57px">
          <ShareIcon size={50} stroke={12} />
          공유하기
        </ActionButton>
        <ActionRule />
        <ActionButton $padding="30px 48px 30px 0">
          <DownloadIcon />
          다운로드 0
        </ActionButton>
      </ActionBar>

      <NavBar>
        <IconButton aria-label="최근 앱"><RecentsIcon /></IconButton>
        <IconButton aria-label="홈"><HomeIcon /></IconButton>
        <IconButton aria-label="이전"><NavBackIcon /></IconButton>
      </NavBar>
    </Screen>
  );
}
